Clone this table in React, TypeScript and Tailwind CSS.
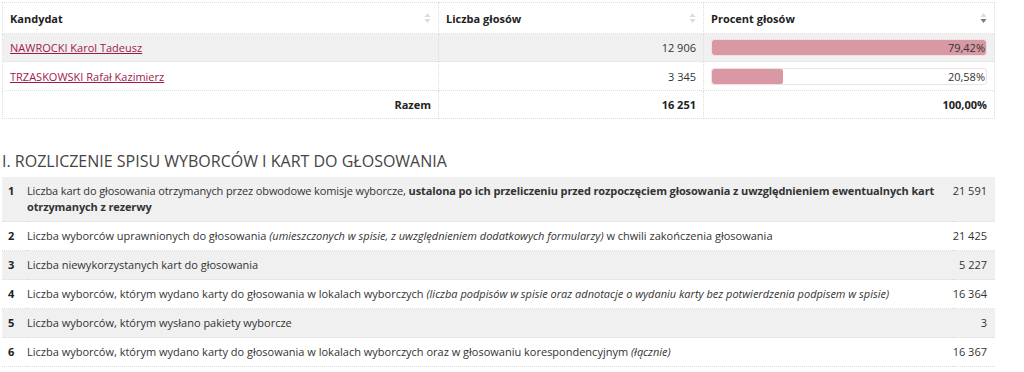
import React from "react";

const candidates = [
  { name: "NAWROCKI Karol Tadeusz", votes: "12 906", pct: 79.42, label: "79,42%" },
  { name: "TRZASKOWSKI Rafał Kazimierz", votes: "3 345", pct: 20.58, label: "20,58%" },
];

const maxPct = Math.max(...candidates.map((c) => c.pct));

const SortIcon = ({ active }: { active?: boolean }) => (
  <svg width="7" height="12" viewBox="0 0 7 12" className="shrink-0">
    <path d="M3.5 1 L6.5 5 L0.5 5 Z" fill="#dcdcdc" />
    <path d="M3.5 11 L6.5 7 L0.5 7 Z" fill={active ? "#7a7a7a" : "#dcdcdc"} />
  </svg>
);

const rows: { n: number; content: React.ReactNode; value: string; tight?: boolean }[] = [
  {
    n: 1,
    tight: true,
    content: (
      <>
        Liczba kart do głosowania otrzymanych przez obwodowe komisje wyborcze,{" "}
        <b>ustalona po ich przeliczeniu przed rozpoczęciem głosowania z uwzględnieniem ewentualnych kart otrzymanych z rezerwy</b>
      </>
    ),
    value: "21 591",
  },
  {
    n: 2,
    content: (
      <>
        Liczba wyborców uprawnionych do głosowania <i>(umieszczonych w spisie, z uwzględnieniem dodatkowych formularzy)</i> w chwili zakończenia głosowania
      </>
    ),
    value: "21 425",
  },
  { n: 3, content: <>Liczba niewykorzystanych kart do głosowania</>, value: "5 227" },
  {
    n: 4,
    content: (
      <>
        Liczba wyborców, którym wydano karty do głosowania w lokalach wyborczych{" "}
        <i>(liczba podpisów w spisie oraz adnotacje o wydaniu karty bez potwierdzenia podpisem w spisie)</i>
      </>
    ),
    value: "16 364",
  },
  { n: 5, content: <>Liczba wyborców, którym wysłano pakiety wyborcze</>, value: "3" },
  {
    n: 6,
    content: (
      <>
        Liczba wyborców, którym wydano karty do głosowania w lokalach wyborczych oraz w głosowaniu korespondencyjnym <i>(łącznie)</i>
      </>
    ),
    value: "16 367",
  },
];

export default function App() {
  return (
    <div className="min-h-[372px] bg-white pl-[2px] pt-[2px] text-[11px] text-[#333]" style={{ fontFamily: '"Open Sans", sans-serif' }}>
      <table className="w-[993px] border-collapse border border-dotted border-[#ddd] leading-[17px]">
        <thead>
          <tr className="h-[31px]">
            <th className="w-[436px] border border-dotted border-[#ddd] px-[7px] text-left font-bold text-[#222]">
              <div className="flex items-center justify-between">
                <span>Kandydat</span>
                <SortIcon />
              </div>
            </th>
            <th className="w-[265px] border border-dotted border-[#ddd] px-[7px] text-left font-bold text-[#222]">
              <div className="flex items-center justify-between">
                <span>Liczba głosów</span>
                <SortIcon />
              </div>
            </th>
            <th className="border border-dotted border-[#ddd] px-[7px] text-left font-bold text-[#222]">
              <div className="flex items-center justify-between">
                <span>Procent głosów</span>
                <SortIcon active />
              </div>
            </th>
          </tr>
        </thead>
        <tbody>
          {candidates.map((c, i) => (
            <tr key={c.name} className={i % 2 === 0 ? "h-[28px] bg-[#f0f0f0]" : "h-[29px] bg-white"}>
              <td className="border border-dotted border-[#ddd] px-[7px]">
                <a href="#" className="text-[#a3184a] underline">{c.name}</a>
              </td>
              <td className="border border-dotted border-[#ddd] px-[7px] text-right">{c.votes}</td>
              <td className="border border-dotted border-[#ddd] px-[7px]">
                <div className="relative h-[17px] overflow-hidden rounded-[3px] border border-[#f2dfe3] bg-white">
                  <div className="h-full rounded-[2px] bg-[#d899a5]" style={{ width: `${(c.pct / maxPct) * 100}%` }} />
                  <span className="absolute inset-y-0 right-[1px] flex items-center">{c.label}</span>
                </div>
              </td>
            </tr>
          ))}
          <tr className="h-[28px] font-bold text-[#222]">
            <td className="border border-dotted border-[#ddd] px-[7px] text-right">Razem</td>
            <td className="border border-dotted border-[#ddd] px-[7px] text-right">16 251</td>
            <td className="border border-dotted border-[#ddd] px-[7px] text-right">100,00%</td>
          </tr>
        </tbody>
      </table>

      <h2 className="mt-[31px] mb-[5px] text-[16px] font-normal uppercase leading-[22px] text-[#444]">
        I. Rozliczenie spisu wyborców i kart do głosowania
      </h2>

      <table className="w-[993px] border-collapse leading-[16px]">
        <tbody>
          {rows.map((r, i) => (
            <tr key={r.n} className={i % 2 === 0 ? "bg-[#f0f0f0]" : "bg-white"}>
              <td className="w-[25px] border-b border-dotted border-[#ddd] py-[6px] pl-[6px] align-top font-bold text-[#222]">{r.n}</td>
              <td className={r.tight ? "border-b border-dotted border-[#ddd] py-[6px] tracking-[-0.12px]" : "border-b border-dotted border-[#ddd] py-[6px]"}>
                {r.content}
              </td>
              <td className="w-[40px] whitespace-nowrap border-b border-dotted border-[#ddd] py-[6px] pr-[8px] text-right align-top">{r.value}</td>
            </tr>
          ))}
        </tbody>
      </table>
    </div>
  );
}
